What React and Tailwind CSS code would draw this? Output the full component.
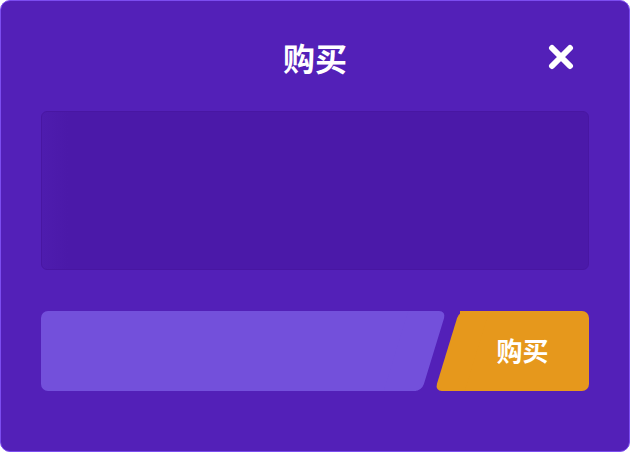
import React from 'react';

function CloseIcon() {
  return (
    <svg width="26" height="26" viewBox="0 0 26 26" className="block">
      <path d="M4 4 L22 22 M22 4 L4 22" stroke="#ffffff" strokeWidth="6" strokeLinecap="round" />
    </svg>
  );
}

export default function App() {
  return (
    <div
      className="w-[630px] h-[452px] bg-[#5320b8] border border-[#7b4cf0] rounded-[10px] flex flex-col text-white"
      style={{ fontFamily: '"Noto Sans CJK SC", "Noto Sans", sans-serif' }}
    >
      {/* Header */}
      <div className="h-[110px] flex items-start pt-[35px] px-[38px]">
        <div className="w-[60px]" />
        <h2 className="flex-1 text-center text-[32px] leading-[42px] font-bold">购买</h2>
        <button className="w-[60px] h-[42px] flex items-center justify-center">
          <CloseIcon />
        </button>
      </div>

      {/* Content box */}
      <div className="mx-[40px] h-[159px] rounded-[6px] bg-[linear-gradient(90deg,#4e1cae,#4b19a9_26px)] border border-[#4816a2]" />

      {/* Input + buy */}
      <div className="mt-[41px] mx-[40px] flex items-stretch h-[80px] gap-[13px]">
        <div className="flex-1 flex">
          <div className="flex-1 bg-[#7350db] rounded-l-[7px]" />
          <div className="w-[38px] -ml-[20px] bg-[#7350db] rounded-r-[7px] -skew-x-[17deg]" />
        </div>
        <button className="w-[142px] flex">
          <div className="w-[30px] -mr-[17px] bg-[#e6981c] rounded-l-[7px] -skew-x-[17deg]" />
          <div className="flex-1 bg-[#e6981c] rounded-r-[7px] flex items-center justify-center pr-[4px] pb-[4px] text-[26px] font-bold text-white">
            购买
          </div>
        </button>
      </div>
    </div>
  );
}
